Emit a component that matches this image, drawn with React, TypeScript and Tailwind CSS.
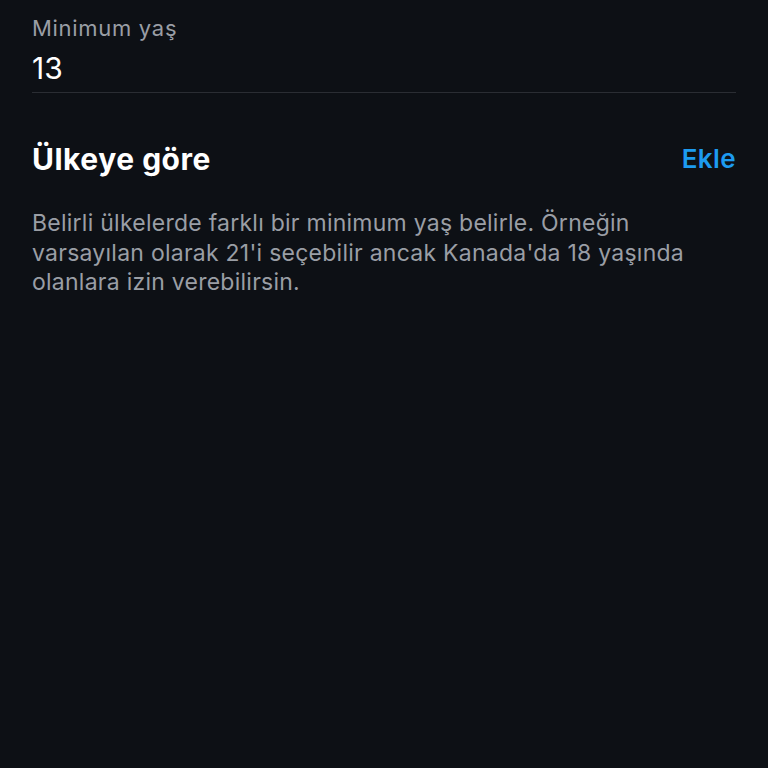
export default function App() {
  return (
    <div
      className="min-h-[768px] w-full bg-[#0d1015] px-8 text-white"
      style={{ fontFamily: "Inter, 'Noto Sans', sans-serif" }}
    >
      <div className="border-b border-[#2a2d33] pt-[13px] pb-[6px]">
        <div className="text-[22px] leading-[30px] tracking-[0.7px] text-[#9a9ea5]">Minimum yaş</div>
        <div className="mt-[7px] text-[30px] leading-[36px] text-white">13</div>
      </div>
      <div className="mt-[48px] flex items-center justify-between">
        <h2 className="text-[30px] font-bold leading-[36px] tracking-[0.5px]">Ülkeye göre</h2>
        <button className="text-[26px] font-semibold leading-[36px] tracking-[0.4px] text-[#1d9bf0]">Ekle</button>
      </div>
      <p className="mt-[32px] text-[23px] leading-[29.5px] tracking-[0.25px] text-[#9a9ea5]">
        Belirli ülkelerde farklı bir minimum yaş belirle. Örneğin varsayılan olarak 21'i seçebilir ancak Kanada'da 18 yaşında olanlara izin verebilirsin.
      </p>
    </div>
  );
}
